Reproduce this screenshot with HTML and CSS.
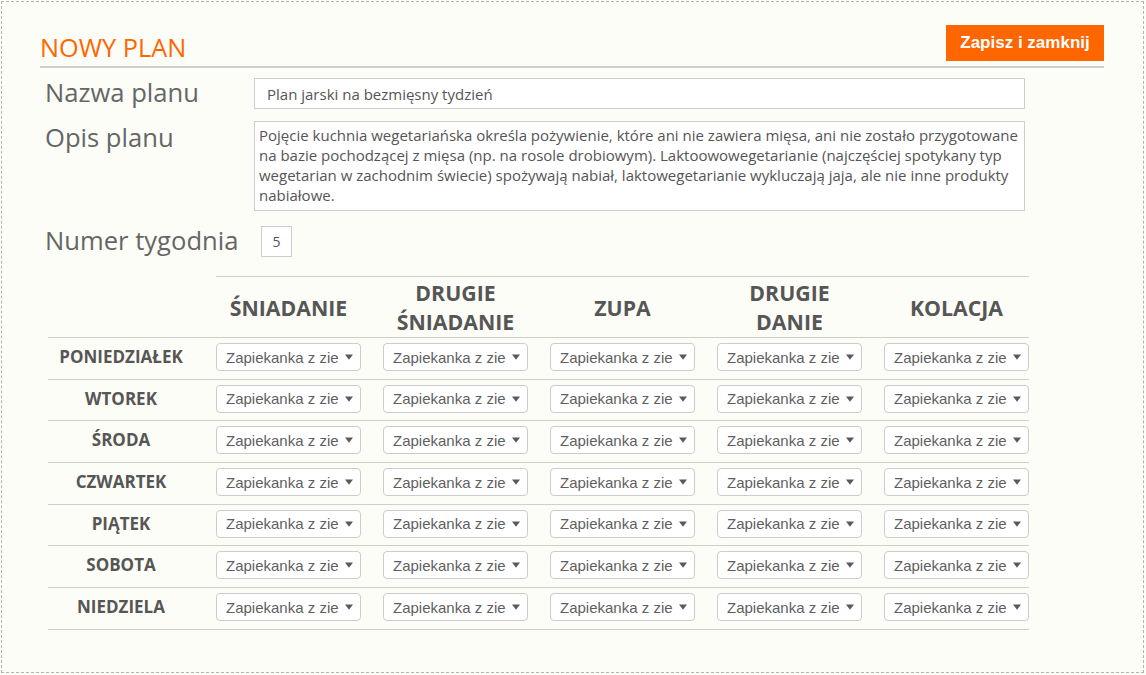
FILE: index.html
```html
<!DOCTYPE html>
<html lang="pl">
<head>
<meta charset="utf-8">
<title>Nowy plan</title>
<link rel="stylesheet" href="styles.css">
</head>
<body>
<div class="page">
  <header class="head">
    <h1 class="title">Nowy plan</h1>
    <button class="save">Zapisz i zamknij</button>
  </header>

  <div class="field field-name">
    <label class="label">Nazwa planu</label>
    <input class="input" type="text" value="Plan jarski na bezmięsny tydzień">
  </div>
  <div class="field field-desc">
    <label class="label label-desc">Opis planu</label>
    <textarea class="textarea">Pojęcie kuchnia wegetariańska określa pożywienie, które ani nie zawiera mięsa, ani nie zostało przygotowane na bazie pochodzącej z mięsa (np. na rosole drobiowym). Laktoowowegetarianie (najczęściej spotykany typ wegetarian w zachodnim świecie) spożywają nabiał, laktowegetarianie wykluczają jaja, ale nie inne produkty nabiałowe.</textarea>
  </div>
  <div class="field field-week">
    <label class="label label-week">Numer tygodnia</label>
    <input class="input input-week" type="text" value="5">
  </div>

  <div class="plan">
    <div class="plan-row plan-head">
      <div class="cell"></div>
      <div class="cell hcell">Śniadanie</div>
      <div class="cell hcell">Drugie<br>śniadanie</div>
      <div class="cell hcell">Zupa</div>
      <div class="cell hcell">Drugie<br>danie</div>
      <div class="cell hcell last">Kolacja</div>
    </div>
    <div id="rows"></div>
  </div>
</div>
<script>
  var days = ["Poniedziałek","Wtorek","Środa","Czwartek","Piątek","Sobota","Niedziela"];
  var arrow = '<svg class="sel-arrow" width="8" height="6" viewBox="0 0 8 6"><path d="M0 0.5 H8 L4 5.8 Z" fill="#5a5a5a"/></svg>';
  var html = "";
  days.forEach(function (d) {
    html += '<div class="plan-row"><div class="cell day">' + d + '</div>';
    for (var i = 0; i < 5; i++) {
      html += '<div class="cell' + (i === 4 ? ' last' : '') + '"><div class="select"><span class="sel-text">Zapiekanka z zie</span>' + arrow + '</div></div>';
    }
    html += '</div>';
  });
  document.getElementById("rows").innerHTML = html;
</script>
</body>
</html>
```

FILE: styles.css
```css
* { box-sizing: border-box; }

html, body {
  margin: 0;
  padding: 0;
  background: #fdfdf8;
}

body {
  padding: 1px 0 0 1px;
  font-family: "Open Sans", "DejaVu Sans", sans-serif;
}

.page {
  width: 1143px;
  height: 672px;
  border: 1px dashed #b3b3b3;
  background: #fdfdf8;
  padding: 23px 39px 0 38px;
}

.head {
  display: flex;
  justify-content: space-between;
  align-items: flex-end;
  padding-bottom: 5px;
  border-bottom: 2px solid #cfcfcf;
}

.title {
  margin: 0 0 2px 0;
  font-weight: 400;
  font-size: 25.3px;
  line-height: 24px;
  color: #ff6600;
  text-transform: uppercase;
}

.save {
  height: 36px;
  width: 158px;
  padding: 0;
  border: 0;
  background: #ff6600;
  color: #fff;
  font-family: "Liberation Sans", Arial, sans-serif;
  font-weight: 700;
  font-size: 17px;
}

.field {
  display: flex;
  align-items: flex-start;
  padding-left: 5px;
}

.field-name { margin-top: 10px; }
.field-desc { margin-top: 12px; }
.field-week { margin-top: 15px; }

.label {
  flex: none;
  width: 209px;
  font-size: 25.6px;
  line-height: 30px;
  color: #666;
}

.label-desc { line-height: 34px; }

.label-week { width: 216px; }

.input {
  width: 771px;
  height: 31px;
  border: 1px solid #cdcdcd;
  background: #fff;
  padding: 0 12px;
  font-family: "Open Sans", sans-serif;
  font-size: 15px;
  color: #555;
  outline: none;
}

.input-week {
  width: 31px;
  padding: 0;
  text-align: center;
  font-size: 14px;
}

.textarea {
  display: block;
  width: 771px;
  height: 90px;
  margin: 0;
  border: 1px solid #cdcdcd;
  background: #fff;
  padding: 3px 4px;
  font-family: "Open Sans", sans-serif;
  font-size: 15px;
  line-height: 20px;
  color: #555;
  resize: none;
  overflow: hidden;
  outline: none;
}

.plan {
  width: 981px;
  margin: 19px 0 0 8px;
}

.plan-row {
  display: grid;
  grid-template-columns: 168px 167px 167px 167px 167px 145px;
  height: 41.7px;
  border-bottom: 1px solid #cfcfcf;
}

.plan-head {
  height: 62px;
}

.cell {
  padding-right: 22px;
  padding-top: 5px;
}

.cell.last { padding-right: 0; }

.hcell {
  display: flex;
  align-items: center;
  justify-content: center;
  text-align: center;
  padding-top: 0;
  border-top: 1px solid #cfcfcf;
  font-weight: 700;
  font-size: 21.3px;
  line-height: 29px;
  color: #565656;
  text-transform: uppercase;
}

.day {
  text-align: center;
  font-weight: 700;
  font-size: 17px;
  line-height: 28px;
  color: #565656;
  text-transform: uppercase;
}

.select {
  display: flex;
  align-items: center;
  justify-content: space-between;
  height: 28px;
  width: 145px;
  padding: 0 7px 0 9px;
  border: 1px solid #cccccc;
  border-radius: 4px;
  background: #fff;
  font-family: "Liberation Sans", Arial, sans-serif;
  font-size: 15px;
  color: #5f5f5f;
  white-space: nowrap;
  overflow: hidden;
}

.sel-arrow {
  flex: none;
  display: block;
}
```
